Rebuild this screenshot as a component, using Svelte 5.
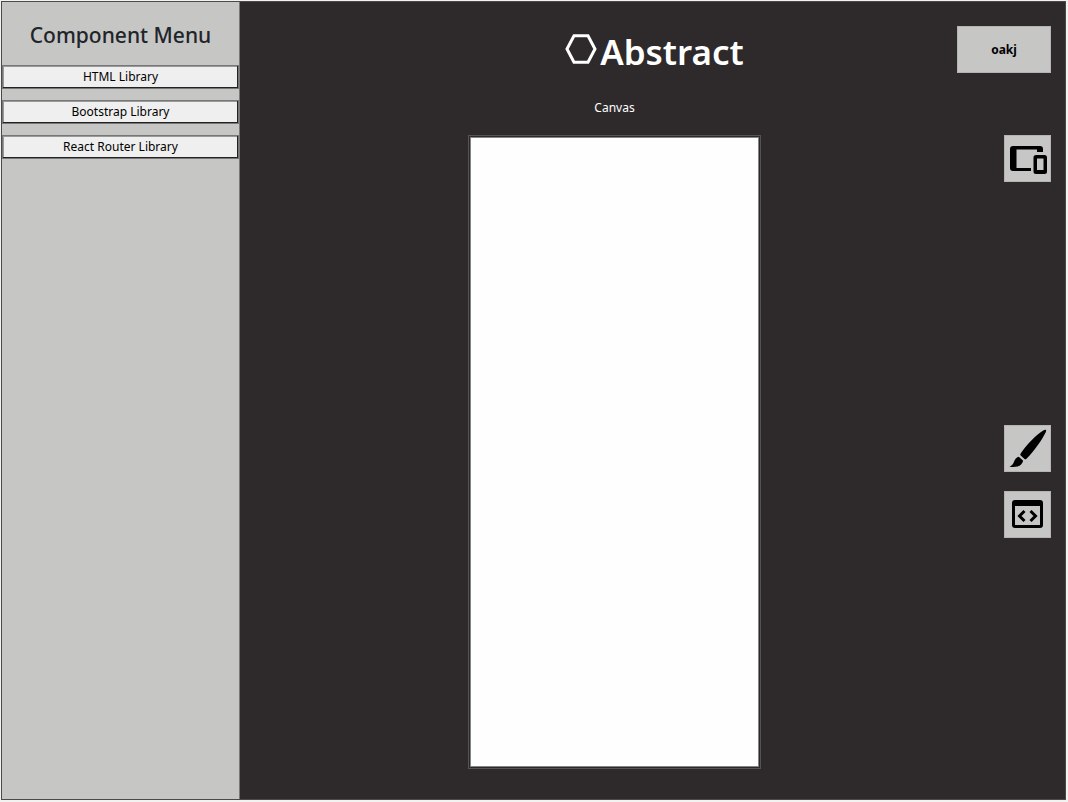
<script>
  const libraries = ['HTML Library', 'Bootstrap Library', 'React Router Library'];
</script>

<div class="app">
  <aside class="menu">
    <h2>Component Menu</h2>
    <div class="libraries">
      {#each libraries as library}
        <button type="button" class="library">{library}</button>
      {/each}
    </div>
  </aside>

  <main class="workspace">
    <header>
      <h1>
        <svg class="logo" viewBox="0 0 32 30" aria-hidden="true">
          <path d="M9 1.8H23L30 15L23 28.2H9L2 15Z" fill="none" stroke="#fff" stroke-width="3" />
        </svg>
        <span>Abstract</span>
      </h1>
      <button type="button" class="project">oakj</button>
    </header>

    <div class="body">
      <section class="stage">
        <p>Canvas</p>
        <div class="frame"><div class="canvas"></div></div>
      </section>

      <nav class="tools" aria-label="Tools">
        <button type="button" class="tool" aria-label="Devices">
          <svg viewBox="0 0 47 47" aria-hidden="true">
            <path d="M9 11H36Q39 11 39 14V17H33V14.500H12.500V33H27V36H9Q6 36 6 33V14Q6 11 9 11Z" />
            <path fill-rule="evenodd" d="M32 20H40.500Q43 20 43 22.500V36.500Q43 39 40.500 39H32Q29.500 39 29.500 36.500V22.500Q29.500 20 32 20ZM33 23.500V35H39.500V23.500Z" />
          </svg>
        </button>
        <div class="group">
          <button type="button" class="tool" aria-label="Style">
            <svg viewBox="0 0 47 47" aria-hidden="true">
              <path d="M41.500 4.800C42.500 5 42.200 6.200 41.600 7.400C38 14.500 31 25 22.500 33.800Q21.500 34.800 20.500 34L16.700 30.600Q15.900 29.800 16.500 28.700C22 20 33 9 39.700 5.200Q40.800 4.600 41.500 4.800Z" />
              <path d="M14.800 31.700L19.200 35.700C18.200 38.500 16.500 41 13.500 41.600C10.500 42.200 7.500 42.200 5.500 41.400C8 40.800 9 39.300 9.900 37C11 34 12.500 32.300 14.800 31.700Z" />
            </svg>
          </button>
          <button type="button" class="tool" aria-label="View code">
            <svg viewBox="0 0 47 47" aria-hidden="true">
              <path fill-rule="evenodd" d="M11 9H36Q39 9 39 12V34Q39 37 36 37H11Q8 37 8 34V12Q8 9 11 9ZM11 15V34H36V15Z" />
              <path d="M20.500 20L15.500 25L20.500 30M26.500 20L31.500 25L26.500 30" fill="none" stroke="#000" stroke-width="3" />
            </svg>
          </button>
        </div>
      </nav>
    </div>
  </main>
</div>

<style>
  :global(body) {
    margin: 0;
    background: #f3f2f0;
    font-family: 'Segoe UI', 'Noto Sans', sans-serif;
    font-size: 12px;
  }

  .app {
    box-sizing: border-box;
    display: flex;
    min-height: calc(100vh - 3px);
    margin: 1px 2px 2px 1px;
    border: 1px solid #4b4a4b;
    background: #2e2a2b;
  }

  .menu {
    box-sizing: border-box;
    width: 238px;
    flex: none;
    border-right: 1px solid #777;
    background: #c6c6c5;
  }

  h1, h2, p {
    margin: 0;
  }

  h2 {
    padding: 18px 0 15px;
    color: #212529;
    font-size: 21px;
    font-weight: 500;
    line-height: 30px;
    text-align: center;
  }

  button {
    padding: 0;
    color: #000;
    font: inherit;
  }

  .libraries {
    display: grid;
    gap: 11px;
  }

  .library {
    height: 24px;
    border: 1px solid #777;
    background: #efefef;
    box-shadow: inset -1px -1px #222, inset 1px 1px #999;
    line-height: 20px;
  }

  .workspace {
    display: flex;
    flex: 1;
    flex-direction: column;
    padding: 24px 14px 30px 18px;
  }

  header {
    display: grid;
    grid-template-columns: 94px 1fr 94px;
  }

  h1 {
    display: flex;
    grid-column: 2;
    justify-content: center;
    gap: 3px;
    color: #fff;
    font-size: 35px;
    font-weight: 600;
    line-height: 52px;
  }

  .logo {
    width: 32px;
    height: 30px;
    margin-top: 8px;
  }

  .body {
    display: grid;
    flex: 1;
    grid-template-columns: 1fr 94px;
    padding-left: 14px;
  }

  .stage {
    display: flex;
    flex-direction: column;
    align-items: center;
    color: #fff;
  }

  p {
    margin: 21px 0 18px;
    line-height: 18px;
  }

  .frame {
    box-sizing: border-box;
    display: flex;
    flex: 1;
    width: 293px;
    padding: 1px;
    border: 1px solid #565455;
  }

  .canvas {
    flex: 1;
    border: 1px solid #858484;
    background: #fefefe;
  }

  .tools {
    display: flex;
    flex-direction: column;
    align-items: flex-end;
    padding-top: 57px;
  }

  .project,
  .tool {
    border: 1px solid #b5b4b3;
    background: #c6c6c5;
  }

  .project {
    height: 47px;
    font-weight: 700;
  }

  .tool {
    width: 47px;
    height: 47px;
  }

  .tool svg {
    display: block;
    width: 47px;
    height: 47px;
    margin: -1px;
  }

  .group {
    display: grid;
    gap: 19px;
    margin-top: 243px;
  }
</style>
